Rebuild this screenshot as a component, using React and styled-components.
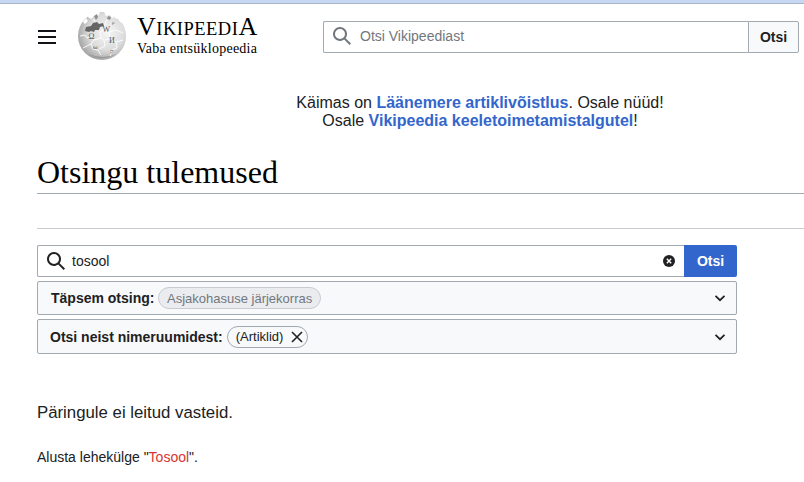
import React from 'react';
import styled, { createGlobalStyle } from 'styled-components';

const Sans = '"Liberation Sans", Arial, sans-serif';
const Serif = '"Liberation Serif", "Times New Roman", serif';

const Global = createGlobalStyle`
  html, body { margin: 0; padding: 0; background: #fff; overflow: hidden; }
  body { font-family: ${Sans}; color: #202122; }
  * { box-sizing: border-box; }
`;

const SearchIcon = ({ size = 20, color = '#202122' }) => (
  <svg width={size} height={size} viewBox="0 0 20 20" fill={color}>
    <path d="M12.2 13.6a7 7 0 1 1 1.4-1.4l5.4 5.4-1.4 1.4zM3 8a5 5 0 1 0 10 0A5 5 0 0 0 3 8" />
  </svg>
);

const Chevron = () => (
  <svg width="12" height="12" viewBox="0 0 12 12" fill="none" stroke="#202122" strokeWidth="1.7">
    <path d="M1.5 3.8 6 8.2l4.5-4.4" />
  </svg>
);

const Globe = () => (
  <svg width="50" height="50" viewBox="0 0 50 50">
    <defs>
      <radialGradient id="g" cx="0.6" cy="0.42" r="0.62">
        <stop offset="0" stopColor="#f6f6f6" />
        <stop offset="0.6" stopColor="#dcdcdc" />
        <stop offset="1" stopColor="#a4a4a4" />
      </radialGradient>
    </defs>
    <circle cx="25" cy="24" r="24" fill="url(#g)" />
    {/* missing puzzle pieces along the top */}
    <path d="M12 -1h11l-1 4-3 2-2-1-3 3-3-2zM27 -1h9l2 6-3 1-2-3-4 1-1-2zM38 3h8v8l-3-1-2-3-3-1z" fill="#fff" />
    <path d="M6 10l3-4 2 3-3 3z" fill="#fff" />
    {/* puzzle seams */}
    <path d="M3 24l5-1 2 3 5-2 2 4-3 4 2 5 5 1 3 5M17 28l7-2 3 2 1 6-6 3M24 26l-1-6 4-3 5 3 7-2 7 3M32 20l1 7-5 1M33 27l6 3 1 6-5 2-2 7M39 30l7-2M16 7l3 4 1 4M27 17l2-8 3-2M6 36l8-4" fill="none" stroke="#fff" strokeWidth="0.9" />
    {/* dark piece */}
    <path d="M8 19l1-4 5-1 2-3 4-1 2 2 4-1 1 3-4 1-1 3-4 0-1 2-3-1-2 1z" fill="#666" />
    <path d="M17 4l3-2 1 3-2 3zM31 4l3 1-1 3-3-1z" fill="#8f8f8f" />
    <g fontFamily={Serif} fill="#555">
      <text x="11.5" y="27" fontSize="8">Ω</text>
      <text x="25.5" y="20" fontSize="8">W</text>
      <text x="32" y="31" fontSize="8">И</text>
      <text x="16" y="37" fontSize="7">ω</text>
      <text x="33" y="41" fontSize="6">ק</text>
      <text x="35" y="12" fontSize="5">ρ</text>
    </g>
    <path d="M11 42 Q25 51 39 42 Q27 48 11 42" fill="#999" />
  </svg>
);

const TopStrip = styled.div`
  height: 4px;
  background: #c5d7f2;
  border-bottom: 1px solid #a9b4c4;
`;

const Header = styled.header`
  display: flex;
  align-items: center;
  height: 65px;
  padding-left: 38px;
`;

const Burger = styled.div`
  width: 18px;
  height: 14px;
  margin-right: 21px;
  border-top: 2px solid #101418;
  border-bottom: 2px solid #101418;
  position: relative;
  &::after {
    content: '';
    position: absolute;
    left: 0;
    right: 0;
    top: 4px;
    height: 2px;
    background: #101418;
  }
`;

const Logo = styled.div`
  display: flex;
  align-items: center;
  width: 246px;
  gap: 10px;
`;

const Wordmark = styled.div`
  font-family: ${Serif};
  color: #000;
  margin-top: -3px;
`;

const Title = styled.div`
  font-size: 26px;
  line-height: 24px;
  letter-spacing: 0.5px;
  small { font-size: 18.5px; }
`;

const Tagline = styled.div`
  font-size: 14px;
  line-height: 15px;
  letter-spacing: 0.25px;
`;

const TopSearch = styled.form`
  display: flex;
  width: 476px;
  height: 32px;
  margin: 0;
`;

const TopInput = styled.div`
  flex: 1;
  display: flex;
  align-items: center;
  gap: 8px;
  padding-left: 8px;
  border: 1px solid #a2a9b1;
  border-right: 0;
  border-radius: 2px 0 0 2px;
  font-size: 14px;
  color: #72777d;
  padding-bottom: 2px;
`;

const TopButton = styled.div`
  width: 51px;
  display: flex;
  align-items: center;
  justify-content: center;
  border: 1px solid #a2a9b1;
  border-radius: 0 2px 2px 0;
  background: #f8f9fa;
  font-size: 14px;
  font-weight: 700;
  color: #202122;
`;

const Notice = styled.div`
  margin: 25px 0 0 216px;
  width: 528px;
  text-align: center;
  font-size: 16px;
  line-height: 18px;
  color: #202122;
  a { color: #3366cc; font-weight: 700; text-decoration: none; }
`;

const Heading = styled.h1`
  margin: 24px 0 0 37px;
  padding-bottom: 3px;
  font-family: ${Serif};
  font-weight: 400;
  font-size: 32px;
  line-height: 36px;
  color: #000;
  border-bottom: 1px solid #a2a9b1;
`;

const Rule = styled.hr`
  margin: 34px 0 0 37px;
  border: 0;
  height: 1px;
  background: #c8ccd1;
`;

const SearchPanel = styled.div`
  width: 700px;
  margin: 16px 0 0 37px;
  display: flex;
  flex-direction: column;
  gap: 4px;
`;

const QueryRow = styled.div`
  display: flex;
  height: 32px;
`;

const QueryInput = styled.div`
  flex: 1;
  display: flex;
  align-items: center;
  gap: 6px;
  padding: 0 9px 0 8px;
  border: 1px solid #a2a9b1;
  border-right: 0;
  border-radius: 2px 0 0 2px;
  font-size: 14px;
  color: #202122;
`;

const QueryText = styled.span`
  flex: 1;
`;

const ClearIcon = () => (
  <svg width="12" height="12" viewBox="0 0 12 12">
    <circle cx="6" cy="6" r="6" fill="#202122" />
    <path d="M3.8 3.8l4.4 4.4M8.2 3.8l-4.4 4.4" stroke="#fff" strokeWidth="1.4" />
  </svg>
);

const SubmitButton = styled.div`
  width: 53px;
  display: flex;
  align-items: center;
  justify-content: center;
  background: #3366cc;
  border-radius: 0 2px 2px 0;
  color: #fff;
  font-size: 14px;
  font-weight: 700;
`;

const Filter = styled.div`
  display: flex;
  align-items: center;
  height: ${p => p.$h}px;
  padding: 0 10px 0 ${p => p.$pl}px;
  gap: 4px;
  background: #f8f9fa;
  border: 1px solid #a2a9b1;
  border-radius: 2px;
  font-size: 14px;
`;

const FilterLabel = styled.b`
  color: #202122;
  font-size: 14px;
`;

const Chip = styled.span`
  display: inline-flex;
  align-items: center;
  gap: 8px;
  height: 22px;
  padding: ${p => (p.$muted ? '0 8px 0 7.5px' : '0 4px 0 8px')};
  border: 1px solid #c8ccd1;
  border-radius: 11px;
  font-size: 13px;
  color: ${p => (p.$muted ? '#72777d' : '#202122')};
  background: ${p => (p.$muted ? '#eaecf0' : '#f8f9fa')};
  border-color: ${p => (p.$muted ? '#c8ccd1' : '#a2a9b1')};
`;

const Spacer = styled.span`
  flex: 1;
`;

const CloseIcon = () => (
  <svg width="12" height="12" viewBox="0 0 12 12" stroke="#202122" strokeWidth="1.6">
    <path d="M1 1l10 10M11 1L1 11" />
  </svg>
);

const NoResults = styled.p`
  margin: 49px 0 0 37px;
  font-size: 16.8px;
  line-height: 20px;
  color: #202122;
`;

const CreatePage = styled.p`
  margin: 26px 0 0 37px;
  font-size: 14px;
  line-height: 16px;
  color: #202122;
  a { color: #d73333; text-decoration: none; }
`;

export default function App() {
  return (
    <>
      <Global />
      <TopStrip />
      <Header>
        <Burger />
        <Logo>
          <Globe />
          <Wordmark>
            <Title>V<small>IKIPEEDI</small>A</Title>
            <Tagline>Vaba entsüklopeedia</Tagline>
          </Wordmark>
        </Logo>
        <TopSearch>
          <TopInput>
            <SearchIcon color="#72777d" />
            Otsi Vikipeediast
          </TopInput>
          <TopButton>Otsi</TopButton>
        </TopSearch>
      </Header>
      <Notice>
        Käimas on <a href="#a">Läänemere artiklivõistlus</a>. Osale nüüd!<br />
        Osale <a href="#b">Vikipeedia keeletoimetamistalgutel</a>!
      </Notice>
      <Heading>Otsingu tulemused</Heading>
      <Rule />
      <SearchPanel>
        <QueryRow>
          <QueryInput>
            <SearchIcon />
            <QueryText>tosool</QueryText>
            <ClearIcon />
          </QueryInput>
          <SubmitButton>Otsi</SubmitButton>
        </QueryRow>
        <Filter $h={34} $pl={13}>
          <FilterLabel>Täpsem otsing:</FilterLabel>
          <Chip $muted>Asjakohasuse järjekorras</Chip>
          <Spacer />
          <Chevron />
        </Filter>
        <Filter $h={35} $pl={12}>
          <FilterLabel>Otsi neist nimeruumidest:</FilterLabel>
          <Chip>(Artiklid) <CloseIcon /></Chip>
          <Spacer />
          <Chevron />
        </Filter>
      </SearchPanel>
      <NoResults>Päringule ei leitud vasteid.</NoResults>
      <CreatePage>Alusta lehekülge "<a href="#c">Tosool</a>".</CreatePage>
    </>
  );
}
